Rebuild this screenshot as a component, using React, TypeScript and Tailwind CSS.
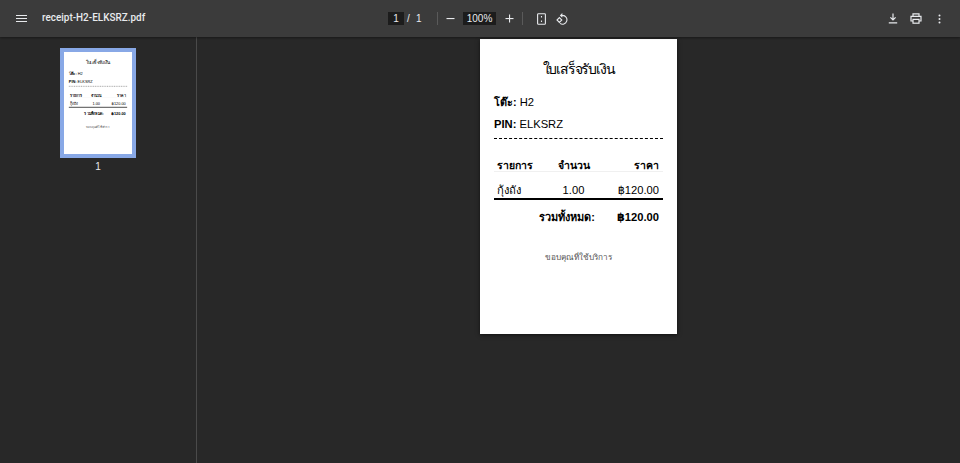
import React from "react";

const font = { fontFamily: '"Liberation Sans", "Noto Sans", "DejaVu Sans", sans-serif' };

function Receipt() {
  return (
    <div className="w-[197px] h-[295px] bg-white text-black px-[14px] flex flex-col shrink-0">
      <div className="text-[14px] leading-[18px] tracking-[-1.2px] text-center mt-[21px]">ใบเสร็จรับเงิน</div>
      <div className="text-[11.2px] leading-[16px] mt-[16px]"><b className="text-[10.8px]">โต๊ะ:</b> <span>H2</span></div>
      <div className="text-[11.2px] leading-[16px] mt-[6px]"><b>PIN:</b> <span>ELKSRZ</span></div>
      <div className="border-t border-dashed border-black mt-[6px]"></div>
      <div className="flex text-[10.5px] leading-[12px] font-bold mt-[20px] pl-[3px] pr-[4px] border-b border-[#f0f0f0]">
        <div className="w-[52px]">รายการ</div>
        <div className="w-[49px] text-center">จำนวน</div>
        <div className="flex-1 text-right">ราคา</div>
      </div>
      <div className="flex text-[11.2px] leading-[16px] mt-[10px] pl-[3px] pr-[4px] border-b-2 border-black">
        <div className="w-[52px]">กุ้งถัง</div>
        <div className="w-[49px] text-center">1.00</div>
        <div className="flex-1 text-right">฿120.00</div>
      </div>
      <div className="flex justify-end text-[11.2px] leading-[16px] font-bold mt-[9px] pl-[3px] pr-[4px]">
        <div className="mr-[22px] text-[10.9px]">รวมทั้งหมด:</div>
        <div>฿120.00</div>
      </div>
      <div className="text-[8.2px] leading-[12px] text-center text-[#555] mt-[27px]">ขอบคุณที่ใช้บริการ</div>
    </div>
  );
}

function Toolbar() {
  return (
    <div className="h-[37px] bg-[#3b3b3b] flex items-center text-[#e8eaed] shrink-0 shadow-[0_1px_2px_rgba(0,0,0,0.4)] relative">
      <div className="w-[388px] flex items-center shrink-0">
        <svg className="ml-[16px]" width="11" height="7" viewBox="0 0 11 7" fill="#e8eaed">
          <rect y="0" width="11" height="1" />
          <rect y="3" width="11" height="1" />
          <rect y="6" width="11" height="1" />
        </svg>
        <span className="ml-[15px] inline-block origin-left scale-x-[0.88] text-[11.3px] font-medium" style={{ fontFamily: "Roboto, sans-serif" }}>receipt-H2-ELKSRZ.pdf</span>
      </div>
      <div className="w-[16px] h-[13px] bg-[#1c1c1c] text-[10px] leading-[13px] text-center">1</div>
      <span className="ml-[3px] w-[7px] text-[10px]">/</span>
      <span className="ml-[2px] w-[10px] text-[10px]">1</span>
      <div className="ml-[11px] w-px h-[13px] bg-[#5a5a5a]"></div>
      <svg className="ml-[8px]" width="9" height="9" viewBox="0 0 9 9" fill="#e8eaed"><rect x="0.5" y="4" width="8" height="1.1" /></svg>
      <div className="ml-[8px] w-[33px] h-[13px] bg-[#1c1c1c] text-[10px] leading-[13px] text-center">100%</div>
      <svg className="ml-[9px]" width="9" height="9" viewBox="0 0 9 9" fill="#e8eaed"><rect x="0.5" y="4" width="8" height="1.1" /><rect x="4" y="0.5" width="1.1" height="8" /></svg>
      <div className="ml-[8px] w-px h-[13px] bg-[#5a5a5a]"></div>
      <svg className="ml-[14px]" width="9" height="12" viewBox="0 0 9 12" fill="none" stroke="#e8eaed" strokeWidth="1.1">
        <rect x="0.6" y="0.8" width="7.8" height="10.4" rx="0.8" />
        <path d="M4.5 3v1.4M4.5 7.6V9" />
      </svg>
      <svg className="ml-[10px]" width="12" height="12" viewBox="0 0 12 12" fill="none" stroke="#e8eaed" strokeWidth="1.1">
        <path d="M5 2.4h1.6a4.4 4.4 0 1 1-2.6 8" />
        <path d="M6.4 0.6 4.6 2.4 6.4 4.2" />
        <path d="M3.4 4.6 5.8 7 3.4 9.4 1 7z" />
      </svg>
      <div className="flex-1"></div>
      <svg width="10" height="11" viewBox="0 0 10 11" fill="none" stroke="#e8eaed" strokeWidth="1.2">
        <path d="M5 0.5v6.2M2.4 4.4 5 7l2.6-2.6M0.8 9.8h8.4" />
      </svg>
      <svg className="ml-[12px]" width="12" height="11" viewBox="0 0 12 11" fill="none" stroke="#e8eaed" strokeWidth="1.2">
        <path d="M3 3V0.8h6V3M3 8H1V3.4h10V8H9" />
        <rect x="3" y="6.4" width="6" height="3.8" />
      </svg>
      <svg className="ml-[16px] mr-[19px]" width="3" height="10" viewBox="0 0 3 10" fill="#e8eaed">
        <circle cx="1.5" cy="1.4" r="1" />
        <circle cx="1.5" cy="5" r="1" />
        <circle cx="1.5" cy="8.6" r="1" />
      </svg>
    </div>
  );
}

export default function App() {
  return (
    <div className="w-[960px] h-[463px] flex flex-col overflow-hidden bg-[#282828]" style={font}>
      <Toolbar />
      <div className="flex-1 flex min-h-0">
        <div className="w-[197px] shrink-0 border-r border-[#4a4a4a] bg-[#282828] flex flex-col items-center pt-[11px]">
          <div className="w-[76px] h-[110px] bg-white border-4 border-[#88a8e6] overflow-hidden">
            <div className="origin-top-left scale-[0.345] w-[197px] h-[295px]">
              <Receipt />
            </div>
          </div>
          <div className="text-[#e8eaed] text-[10px] leading-[12px] mt-[3px]">1</div>
        </div>
        <div className="flex-1 flex justify-center items-start pt-[2px]">
          <div className="shadow-[0_1px_4px_rgba(0,0,0,0.6)]">
            <Receipt />
          </div>
        </div>
      </div>
    </div>
  );
}
